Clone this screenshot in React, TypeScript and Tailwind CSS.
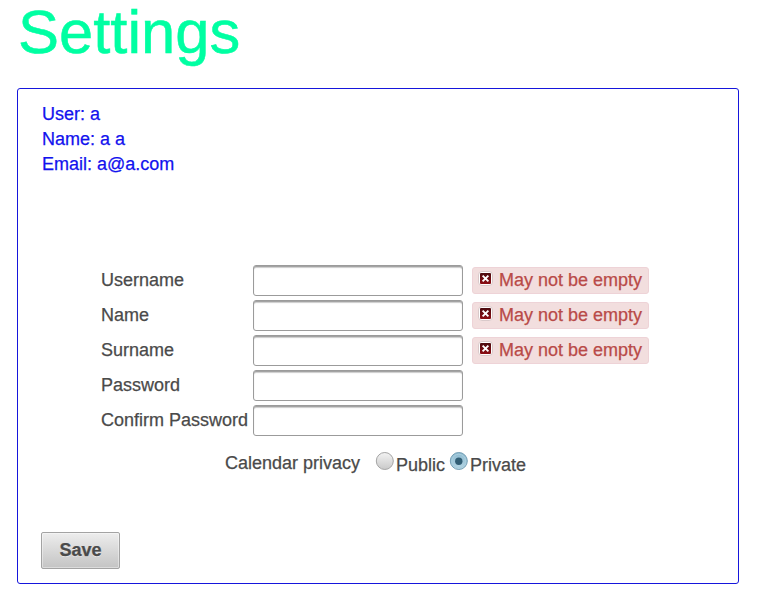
import React from "react";

function ErrorIcon() {
  return (
    <svg width="15" height="15" viewBox="0 0 15 15" className="mt-[3px] shrink-0">
      <defs>
        <linearGradient id="error-fill" x1="0" y1="0" x2="0" y2="1">
          <stop offset="0" stopColor="#4c0c10" />
          <stop offset="1" stopColor="#8e0d14" />
        </linearGradient>
      </defs>
      <rect x="0.5" y="0.5" width="14" height="14" rx="3.5" fill="#ffffff" stroke="#d9c9ca" />
      <rect x="2" y="2" width="11" height="11" rx="1" fill="url(#error-fill)" />
      <path d="M4.6 4.6 10.4 10.4M10.4 4.6 4.6 10.4" stroke="#fff" strokeWidth="1.9" />
    </svg>
  );
}

function Field({ label, type = "text", error }: { label: string; type?: string; error?: string }) {
  return (
    <div className="flex h-[35px] items-start">
      <label className="mt-[3px] w-[152px] whitespace-nowrap">{label}</label>
      <input
        type={type}
        aria-label={label}
        className="h-[31px] w-[210px] rounded-[3px] border border-[#9b9b9b] bg-white px-2 shadow-[inset_0_1px_0_#a3a3a3,inset_0_2px_1px_#cccccc] outline-none"
      />
      {error && (
        <div className="ml-[9px] mt-[2px] flex h-[27px] w-[177px] rounded-[3px] border border-[#eed3d7] bg-[#f2dede] pl-[5px] text-[#b94a48]">
          <ErrorIcon />
          <span className="ml-[6px] whitespace-nowrap">{error}</span>
        </div>
      )}
    </div>
  );
}

function Radio({ checked }: { checked?: boolean }) {
  return (
    <svg width="19" height="19" viewBox="0 0 19 19" className="shrink-0">
      <defs>
        <linearGradient id="radio-off" x1="0" y1="0" x2="0" y2="1">
          <stop offset="0" stopColor="#f3f3f3" />
          <stop offset="1" stopColor="#c9c9c9" />
        </linearGradient>
        <linearGradient id="radio-on" x1="0" y1="0" x2="0" y2="1">
          <stop offset="0" stopColor="#8dbad0" />
          <stop offset="1" stopColor="#b5d6e5" />
        </linearGradient>
      </defs>
      <circle cx="9.8" cy="10" r="8.5" fill={checked ? "url(#radio-on)" : "url(#radio-off)"} stroke={checked ? "#749fb5" : "#a5a5a5"} />
      {checked && <circle cx="9.8" cy="10" r="6.8" fill="none" stroke="#a9cede" />}
      {checked && <circle cx="9.8" cy="10.2" r="3.7" fill="#315e75" />}
    </svg>
  );
}

export default function App() {
  return (
    <main className="h-[609px] w-[763px] bg-white pl-[17px] font-['Liberation_Sans',Arial,sans-serif] text-[18px] leading-[25px] text-[#4a4a4a] [-webkit-text-stroke:0.25px_currentColor]">
      <h1 className="h-[88px] pl-px text-[61.5px] leading-[64px] text-[#00ffa2] [-webkit-text-stroke:0.5px_currentColor]">Settings</h1>
      <section className="h-[496px] w-[722px] rounded-[3px] border border-[#1616dc] pt-[13px]">
        <div className="h-[163px] pl-[24px] text-[#1212ee]">
          <p>User: a</p>
          <p>Name: a a</p>
          <p>Email: a@a.com</p>
        </div>
        <div className="pl-[83px]">
          <Field label="Username" error="May not be empty" />
          <Field label="Name" error="May not be empty" />
          <Field label="Surname" error="May not be empty" />
          <Field label="Password" type="password" />
          <Field label="Confirm Password" type="password" />
        </div>
        <div className="mt-[11px] flex h-[81px] items-start pl-[207px]">
          <span className="w-[150px]">Calendar privacy</span>
          <Radio />
          <span className="ml-[2px] mt-[2px] w-[53px]">Public</span>
          <Radio checked />
          <span className="ml-[2px] mt-[2px]">Private</span>
        </div>
        <button className="ml-[23px] block h-[37px] w-[79px] rounded-[2px] border border-[#a3a3a3] bg-linear-to-b from-[#ededed] to-[#c4c4c4] font-bold leading-[33px] shadow-[inset_0_0_0_1px_#ffffff66] [text-shadow:0_1px_0_#ffffff80]">
          Save
        </button>
      </section>
    </main>
  );
}
